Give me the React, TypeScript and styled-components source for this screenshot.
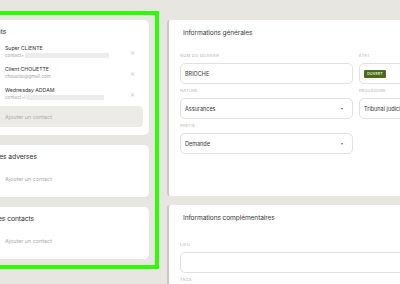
import styled, { createGlobalStyle } from "styled-components";

const GlobalStyle = createGlobalStyle`
  * { box-sizing: border-box; }
  body {
    margin: 0;
    background: #e8e6e1;
    font-family: Inter, "Noto Sans", sans-serif;
    overflow: hidden;
  }
`;

const clients = [
  { name: "Super CLIENTE", sub: "contact+", hidden: 84 },
  { name: "Client CHOUETTE", sub: "chouette@gmail.com", hidden: 0 },
  { name: "Wednesday ADDAM", sub: "contact+l", hidden: 78 },
];

const App = () => {
  return (
    <>
      <GlobalStyle />
      <Page>
        <LeftColumn>
          <ContactCard>
            <CardTitle>Clients</CardTitle>
            {clients.map((c) => (
              <ContactRow key={c.name}>
                <ContactInfo>
                  <ContactName>{c.name}</ContactName>
                  <ContactSub>
                    {c.sub}
                    {c.hidden > 0 && <Redacted style={{ width: c.hidden }} />}
                  </ContactSub>
                </ContactInfo>
                <RemoveButton>×</RemoveButton>
              </ContactRow>
            ))}
            <AddButton $active>Ajouter un contact</AddButton>
          </ContactCard>
          <ContactCard>
            <CardTitle>Parties adverses</CardTitle>
            <AddButton>Ajouter un contact</AddButton>
          </ContactCard>
          <ContactCard>
            <CardTitle>Autres contacts</CardTitle>
            <AddButton>Ajouter un contact</AddButton>
          </ContactCard>
        </LeftColumn>

        <RightColumn>
          <InfoCard $pad={42}>
            <InfoTitle $gap={15}>Informations générales</InfoTitle>
            <FieldGrid>
              <Field>
                <Label>Nom du dossier</Label>
                <Input>BRIOCHE</Input>
              </Field>
              <Field>
                <Label>État</Label>
                <Input>
                  <Badge>OUVERT</Badge>
                </Input>
              </Field>
              <Field>
                <Label>Nature</Label>
                <Input>
                  Assurances
                  <Caret />
                </Input>
              </Field>
              <Field>
                <Label>Procédure</Label>
                <Input>
                  Tribunal judiciaire
                  <Caret />
                </Input>
              </Field>
              <Field>
                <Label>Partie</Label>
                <Input>
                  Demande
                  <Caret />
                </Input>
              </Field>
            </FieldGrid>
          </InfoCard>
          <InfoCard $pad={20}>
            <InfoTitle $gap={19}>Informations complémentaires</InfoTitle>
            <FieldList>
              <Field>
                <Label>Lieu</Label>
                <Input />
              </Field>
              <Field>
                <Label>Tags</Label>
                <Input />
              </Field>
            </FieldList>
          </InfoCard>
        </RightColumn>
      </Page>
    </>
  );
};

export default App;

const Page = styled.div`
  display: flex;
  align-items: flex-start;
  gap: 8px;
  padding-top: 11px;
  margin-left: -50px;
  width: 530px;
`;

const LeftColumn = styled.div`
  width: 209px;
  flex-shrink: 0;
  border: 4px solid #2bff00;
  padding: 5px 6px 6px 6px;
  display: flex;
  flex-direction: column;
  gap: 10px;
`;

const ContactCard = styled.div`
  background: #ffffff;
  border-radius: 5px;
  padding: 7px 6px 8px 25px;
  display: flex;
  flex-direction: column;
`;

const CardTitle = styled.div`
  font-size: 6.8px;
  line-height: 10px;
  color: #333333;
  letter-spacing: -0.1px;
  margin-bottom: 4px;
`;

const ContactRow = styled.div`
  display: flex;
  align-items: center;
  padding: 3px 8px 3px 20px;
  height: 21px;
`;

const ContactInfo = styled.div`
  flex: 1;
  display: flex;
  flex-direction: column;
`;

const ContactName = styled.div`
  font-size: 5.2px;
  line-height: 8px;
  color: #2f2f2f;
`;

const ContactSub = styled.div`
  display: flex;
  align-items: center;
  font-size: 4.6px;
  line-height: 7px;
  color: #a5a5a5;
`;

const Redacted = styled.span`
  display: inline-block;
  height: 5px;
  margin-left: 1px;
  background: #ececec;
  border-radius: 1px;
  filter: blur(0.4px);
`;

const RemoveButton = styled.span`
  font-size: 8px;
  line-height: 8px;
  color: #cfcfcf;
`;

const AddButton = styled.div<{ $active?: boolean }>`
  margin-top: 2px;
  height: 21px;
  display: flex;
  align-items: center;
  padding-left: 20px;
  border-radius: 4px;
  font-size: 5.4px;
  color: #ababab;
  background: ${(p) => (p.$active ? "#ecebe8" : "transparent")};
`;

const RightColumn = styled.div`
  flex: 1;
  display: flex;
  flex-direction: column;
  gap: 9px;
  padding-top: 9px;
`;

const InfoCard = styled.div<{ $pad: number }>`
  background: #ffffff;
  border-left: 2px solid #cdc9c2;
  border-radius: 3px;
  padding: 8px 10px ${(p) => p.$pad}px 11px;
`;

const InfoTitle = styled.div<{ $gap: number }>`
  font-size: 6.6px;
  line-height: 10px;
  color: #3a3a3a;
  letter-spacing: -0.1px;
  padding-left: 3px;
  margin-bottom: ${(p) => p.$gap}px;
`;

const FieldGrid = styled.div`
  display: grid;
  grid-template-columns: 173px 1fr;
  column-gap: 6px;
  row-gap: 4px;
`;

const FieldList = styled.div`
  display: flex;
  flex-direction: column;
  gap: 4px;
`;

const Field = styled.div`
  display: flex;
  flex-direction: column;
`;

const Label = styled.div`
  font-size: 4px;
  line-height: 6px;
  text-transform: uppercase;
  letter-spacing: 0.3px;
  color: #b3afa8;
  margin-bottom: 4px;
`;

const Input = styled.div`
  position: relative;
  height: 21px;
  border: 1px solid #e4e1dc;
  border-radius: 5px;
  display: flex;
  align-items: center;
  padding: 0 4px;
  font-size: 5.5px;
  color: #333333;
  white-space: nowrap;
  overflow: hidden;
`;

const Caret = styled.span`
  position: absolute;
  right: 9px;
  top: 9px;
  width: 0;
  height: 0;
  border-left: 1.5px solid transparent;
  border-right: 1.5px solid transparent;
  border-top: 2px solid #666666;
`;

const Badge = styled.span`
  background: #4a6b1d;
  color: #e8f0dc;
  font-size: 3.5px;
  font-weight: 600;
  letter-spacing: 0.2px;
  padding: 2px 3px;
  border-radius: 1px;
  line-height: 4px;
`;
